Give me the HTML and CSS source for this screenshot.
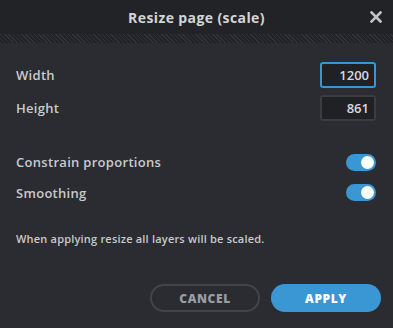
FILE: index.html
```html
<!DOCTYPE html>
<html>
<head>
    <title>Resize page (scale)</title>
    <link rel="stylesheet" href="styles.css">
</head>
<body>
    <div class="dialog">
        <header class="dialog-header">
            <h1>Resize page (scale)</h1>
            <svg class="close" width="12" height="12" viewBox="0 0 12 12">
                <path d="M1.5 1.5 L10.5 10.5 M10.5 1.5 L1.5 10.5" stroke="#c2c3c5" stroke-width="2.6" stroke-linecap="square"/>
            </svg>
        </header>
        <div class="hatch"></div>
        <form class="dialog-body">
            <div class="row">
                <label for="width">Width</label>
                <input type="text" id="width" class="num focused" value="1200">
            </div>
            <div class="row">
                <label for="height">Height</label>
                <input type="text" id="height" class="num" value="861">
            </div>
            <div class="row toggles-first">
                <label>Constrain proportions</label>
                <span class="toggle"><span class="knob"></span></span>
            </div>
            <div class="row">
                <label>Smoothing</label>
                <span class="toggle"><span class="knob"></span></span>
            </div>
            <p class="note">When applying resize all layers will be scaled.</p>
            <div class="buttons">
                <button type="button" class="btn cancel">CANCEL</button>
                <button type="button" class="btn apply">APPLY</button>
            </div>
        </form>
    </div>
</body>
</html>
```
FILE: styles.css
```css
body {
    margin: 0;
    padding: 0;
    background-color: #2a2c31;
    font-family: "Open Sans", "DejaVu Sans", sans-serif;
    color: #c9cacc;
}
.dialog {
    width: 393px;
    height: 328px;
    background-color: #2a2c31;
}
.dialog-header {
    height: 34px;
    background-color: #222327;
    display: flex;
    align-items: center;
    justify-content: center;
    position: relative;
}
.dialog-header h1 {
    margin: 0;
    font-size: 14px;
    font-weight: 700;
    letter-spacing: 0.4px;
    color: #d4d5d7;
}
.close {
    position: absolute;
    right: 11px;
    top: 11px;
}
.hatch {
    height: 9px;
    background-color: #222327;
    background-image: repeating-linear-gradient(45deg, #30323a 0, #30323a 1px, transparent 1px, transparent 3px);
}
.dialog-body {
    padding: 17px 17px 0 16px;
}
.row {
    display: flex;
    justify-content: space-between;
    align-items: center;
    height: 29px;
    margin-bottom: 4px;
}
.row label {
    font-size: 13px;
    font-weight: 600;
    letter-spacing: 0.3px;
    color: #c9cacc;
}
.num {
    width: 42px;
    height: 22px;
    padding: 0 5px;
    border: 2px solid #3a3c42;
    border-radius: 3px;
    background-color: #202125;
    color: #d8d9db;
    font-family: inherit;
    font-size: 13px;
    font-weight: 600;
    text-align: right;
    outline: none;
}
.num.focused {
    border-color: #3b95cf;
}
.toggles-first {
    margin-top: 26px;
    height: 28px;
    margin-bottom: 2px;
}
.toggle {
    width: 30px;
    height: 17px;
    border-radius: 9px;
    background-color: #3a97d4;
    display: flex;
    align-items: center;
    justify-content: flex-end;
    padding: 0 2px;
    box-sizing: border-box;
}
.knob {
    width: 13px;
    height: 13px;
    border-radius: 50%;
    background-color: #ffffff;
}
.note {
    margin: 24px 0 0 0;
    font-size: 11px;
    font-weight: 600;
    letter-spacing: 0.2px;
    color: #c9cacc;
}
.buttons {
    display: flex;
    justify-content: flex-end;
    gap: 11px;
    margin-top: 38px;
    margin-right: -5px;
}
.btn {
    width: 110px;
    height: 28px;
    border-radius: 14px;
    font-family: inherit;
    font-size: 12px;
    font-weight: 800;
    letter-spacing: 0.6px;
    cursor: pointer;
}
.cancel {
    background-color: transparent;
    border: 2px solid #41444a;
    color: #9c9da0;
}
.apply {
    background-color: #3a97d4;
    border: none;
    color: #ffffff;
}
```
